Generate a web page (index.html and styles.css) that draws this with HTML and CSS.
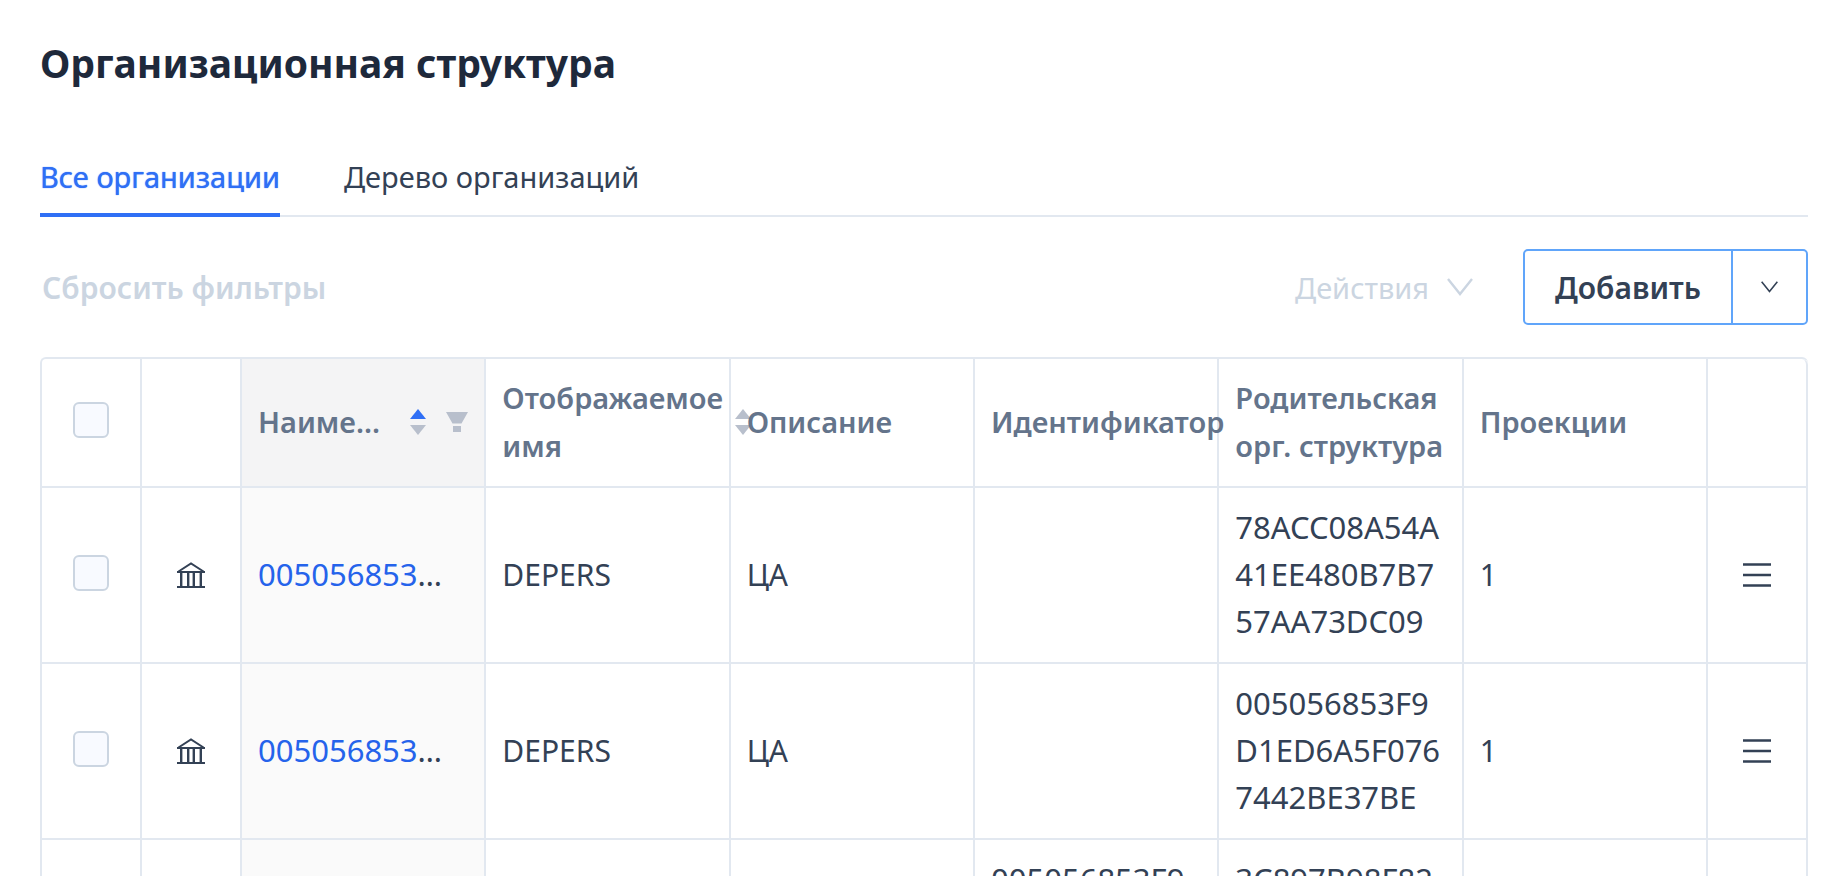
FILE: index.html
```html
<!DOCTYPE html>
<html lang="ru">
<head>
    <meta charset="UTF-8">
    <meta name="viewport" content="width=device-width, initial-scale=1.0">
    <title>Организационная структура</title>
    <link rel="stylesheet" href="styles.css">
</head>
<body>
    <svg class="sprite" width="0" height="0" aria-hidden="true">
        <symbol id="icon-bank" viewBox="0 0 28 26">
            <path d="M0 10 H28 M1.500 9.500 L14 1.500 L26.500 9.500 M0 25 H28" fill="none" stroke="currentColor" stroke-width="2"/>
            <path d="M4.200 10 V25 M11.200 10 V25 M16.800 10 V25 M23.800 10 V25" fill="none" stroke="currentColor" stroke-width="2.400"/>
        </symbol>
        <symbol id="icon-menu" viewBox="0 0 28 24">
            <path d="M0 1.5 H28 M0 12 H28 M0 22.5 H28" fill="none" stroke="currentColor" stroke-width="2.4"/>
        </symbol>
        <symbol id="icon-chevron" viewBox="0 0 26 18">
            <path d="M1 1 L13 16 L25 1" fill="none" stroke="currentColor" stroke-width="2.4"/>
        </symbol>
    </svg>

    <header class="page-header">
        <h1>Организационная структура</h1>
    </header>

    <nav class="tabs">
        <a href="#all" class="tab active">Все организации</a>
        <a href="#tree" class="tab">Дерево организаций</a>
    </nav>

    <div class="toolbar">
        <button type="button" class="btn-text btn-reset" disabled>Сбросить фильтры</button>
        <div class="toolbar-right">
            <button type="button" class="btn-text btn-actions" disabled>Действия
                <svg class="chevron"><use href="#icon-chevron"/></svg>
            </button>
            <div class="btn-group">
                <button type="button" class="btn-add">Добавить</button>
                <button type="button" class="btn-more" aria-label="Ещё">
                    <svg class="chevron-small"><use href="#icon-chevron"/></svg>
                </button>
            </div>
        </div>
    </div>

    <div class="table-wrap">
        <table>
            <colgroup>
                <col class="col-small">
                <col class="col-small">
                <col span="6">
                <col class="col-small">
            </colgroup>
            <thead>
                <tr>
                    <th class="center"><input type="checkbox" aria-label="Выбрать все"></th>
                    <th></th>
                    <th class="sorted">
                        <div class="th-content">
                            <span class="th-title ellipsis">Наименование</span>
                            <svg class="sorter" viewBox="0 0 16 26"><path class="on" d="M8 0 L16 10 H0 Z"/><path d="M0 16 H16 L8 26 Z"/></svg>
                            <svg class="filter" viewBox="0 0 22 20"><path d="M0 0 H22 L15.500 11.500 H6.500 Z M7 14 H15 V20 H7 Z"/></svg>
                        </div>
                    </th>
                    <th>
                        <div class="th-content">
                            <span class="th-title">Отображаемое имя</span>
                            <svg class="sorter" viewBox="0 0 16 26"><path d="M8 0 L16 10 H0 Z"/><path d="M0 16 H16 L8 26 Z"/></svg>
                        </div>
                    </th>
                    <th>Описание</th>
                    <th>Идентификатор</th>
                    <th>Родительская орг. структура</th>
                    <th>Проекции</th>
                    <th></th>
                </tr>
            </thead>
            <tbody>
                <tr>
                    <td class="center"><input type="checkbox" aria-label="Выбрать строку"></td>
                    <td class="center"><svg class="bank"><use href="#icon-bank"/></svg></td>
                    <td class="sorted code"><div class="cell-name ellipsis"><a href="#org1">005056853F9D1ED6A5F0</a></div></td>
                    <td>DEPERS</td>
                    <td>ЦА</td>
                    <td class="code"></td>
                    <td class="code">78ACC08A54A41EE480B7B757AA73DC09</td>
                    <td>1</td>
                    <td class="center"><button type="button" class="btn-menu" aria-label="Меню"><svg><use href="#icon-menu"/></svg></button></td>
                </tr>
                <tr>
                    <td class="center"><input type="checkbox" aria-label="Выбрать строку"></td>
                    <td class="center"><svg class="bank"><use href="#icon-bank"/></svg></td>
                    <td class="sorted code"><div class="cell-name ellipsis"><a href="#org2">005056853F9D1ED6A5F0</a></div></td>
                    <td>DEPERS</td>
                    <td>ЦА</td>
                    <td class="code"></td>
                    <td class="code">005056853F9D1ED6A5F0767442BE37BE</td>
                    <td>1</td>
                    <td class="center"><button type="button" class="btn-menu" aria-label="Меню"><svg><use href="#icon-menu"/></svg></button></td>
                </tr>
                <tr>
                    <td class="center"><input type="checkbox" aria-label="Выбрать строку"></td>
                    <td class="center"></td>
                    <td class="sorted code"></td>
                    <td></td>
                    <td></td>
                    <td class="code">005056853F9D1ED6A5F0767442BE37BE</td>
                    <td class="code">3C897B98F8241EE480B7B757AA73DC09</td>
                    <td></td>
                    <td class="center"></td>
                </tr>
            </tbody>
        </table>
    </div>
</body>
</html>
```
FILE: styles.css
```css
:root {
    --text: #334155;
    --heading: #1e293b;
    --muted: #64748b;
    --disabled: #cbd5e1;
    --line: #e2e8f0;
    --accent: #2f6ff5;
    --link: #2563eb;
    --icon: #b8bfcc;
}

* {
    box-sizing: border-box;
}

body {
    margin: 0;
    padding: 31px 28px 0 40px;
    height: 100vh;
    overflow: hidden;
    background: #fff;
    color: var(--text);
    font-family: "Noto Sans", sans-serif;
    font-size: 30px;
    line-height: 47px;
}

button {
    font: inherit;
    color: inherit;
    background: none;
    border: none;
    padding: 0;
    cursor: pointer;
}

.sprite {
    position: absolute;
}

h1 {
    margin: 0;
    color: var(--heading);
    font-size: 39px;
    font-weight: 700;
    line-height: 64px;
}

.tabs {
    display: flex;
    gap: 64px;
    margin-top: 58px;
    box-shadow: inset 0 -2px var(--line);
}

.tab {
    padding-bottom: 13px;
    border-bottom: 4px solid transparent;
    color: var(--text);
    font-size: 29px;
    text-decoration: none;
}

.tab.active {
    color: var(--accent);
    border-color: var(--accent);
    text-shadow: 0 0 1px currentColor;
}

.toolbar {
    display: flex;
    justify-content: space-between;
    align-items: center;
    margin: 32px 0;
}

.toolbar-right {
    display: flex;
    align-items: center;
    gap: 50px;
}

.btn-text {
    display: flex;
    align-items: center;
    gap: 18px;
    color: var(--disabled);
}

.btn-reset {
    padding-left: 2px;
    font-weight: 600;
}

.btn-actions {
    font-size: 29px;
}

.chevron {
    width: 26px;
    height: 18px;
}

.chevron-small {
    width: 17px;
    height: 12px;
}

.btn-group {
    display: flex;
    height: 76px;
    border: 2px solid #60a5fa;
    border-radius: 5px;
}

.btn-add {
    padding: 0 30px;
    font-weight: 600;
}

.btn-more {
    display: flex;
    align-items: center;
    justify-content: center;
    width: 75px;
    border-left: 2px solid #60a5fa;
}

.table-wrap {
    border: 2px solid var(--line);
    border-right: none;
    border-radius: 6px 6px 0 0;
}

table {
    width: 100%;
    table-layout: fixed;
    border-collapse: separate;
    border-spacing: 0;
}

.col-small {
    width: 100px;
}

th,
td {
    padding: 16px 16px 17px;
    border-right: 2px solid var(--line);
    border-bottom: 2px solid var(--line);
    text-align: left;
    vertical-align: middle;
}

th {
    padding: 15px 16px 16px;
    color: var(--muted);
    font-size: 29px;
    font-weight: 600;
    line-height: 48px;
}

th:last-child {
    border-top-right-radius: 6px;
}

td {
    word-break: break-all;
}

.code {
    font-size: 31px;
}

.center {
    padding: 0;
    text-align: center;
}

th.sorted {
    background: #f4f4f5;
}

td.sorted {
    background: #fafafa;
}

.th-content {
    display: flex;
    align-items: center;
}

.sorter,
.filter {
    flex: none;
    fill: var(--icon);
}

.sorter {
    width: 16px;
    height: 26px;
    margin-left: 12px;
}

.sorter .on {
    fill: var(--accent);
}

.filter {
    width: 22px;
    height: 20px;
    margin-left: 20px;
}

.ellipsis {
    overflow: hidden;
    text-overflow: ellipsis;
    white-space: nowrap;
}

.th-title.ellipsis {
    flex: 1;
}

.cell-name {
    max-width: 196px;
}

.cell-name a {
    color: var(--link);
    text-decoration: none;
}

input[type="checkbox"] {
    appearance: none;
    display: block;
    width: 36px;
    height: 36px;
    margin: 0 auto 5px;
    border: 2px solid var(--disabled);
    border-radius: 6px;
    background: #f8faff;
}

.bank {
    display: block;
    width: 28px;
    height: 26px;
    margin: 0 auto;
}

.btn-menu {
    display: block;
    margin: 0 auto;
}

.btn-menu svg {
    display: block;
    width: 28px;
    height: 24px;
}
```
